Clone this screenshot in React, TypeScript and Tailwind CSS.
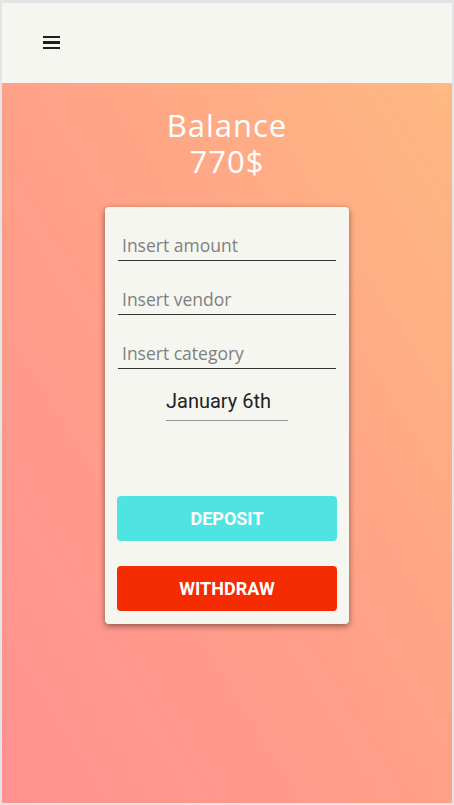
import React from "react";

export default function App() {
  return (
    <div className="w-[454px] h-[805px] flex flex-col border-l-2 border-r-2 border-b-2 border-t-[3px] border-[#e4e4e4] overflow-hidden">
      <header className="h-[80px] shrink-0 bg-[#f6f6f1] flex items-center pl-[41px]">
        <div className="flex flex-col gap-[3px] w-[17px] mt-[-1px]">
          <div className="h-[2.5px] bg-[#1e1e1e]" />
          <div className="h-[2.5px] bg-[#1e1e1e]" />
          <div className="h-[2.5px] bg-[#1e1e1e]" />
        </div>
      </header>
      <main className="flex-1 flex flex-col items-center bg-[linear-gradient(to_top_right,#ff9190,#ffa088_50%,#ffb982)] pt-[24px]">
        <div className="text-white text-center text-[31px] leading-[36px] tracking-[1px] font-['Open_Sans',sans-serif]">
          <div>Balance</div>
          <div>770$</div>
        </div>
        <div className="mt-[28px] w-[244px] bg-[#f6f6f1] rounded-[4px] shadow-[0_2px_6px_rgba(0,0,0,0.45)] px-[12px] pt-[22px] pb-[13px] flex flex-col">
          {["Insert amount", "Insert vendor", "Insert category"].map((p) => (
            <div key={p} className="mx-[1px] mb-[22px] last-of-type:mb-0 h-[32px] border-b border-[#333] flex items-end pb-[3px] pl-[4px]">
              <span className="text-[17.5px] leading-[24px] text-[#808080] font-['Open_Sans',sans-serif]">{p}</span>
            </div>
          ))}
          <div className="flex justify-center mt-[-2px]">
            <div className="w-[122px] border-b border-[#999] text-left text-[20px] leading-[24px] pb-[7px] text-[#222] font-['Roboto',sans-serif]">
              January 6th
            </div>
          </div>
          <button className="mt-[75px] h-[45px] rounded-[4px] bg-[#4fe3e1] text-white font-bold text-[18px] font-['Roboto',sans-serif]">
            DEPOSIT
          </button>
          <button className="mt-[25px] h-[45px] rounded-[4px] bg-[#f52c02] text-white font-bold text-[18px] font-['Roboto',sans-serif]">
            WITHDRAW
          </button>
        </div>
      </main>
    </div>
  );
}
